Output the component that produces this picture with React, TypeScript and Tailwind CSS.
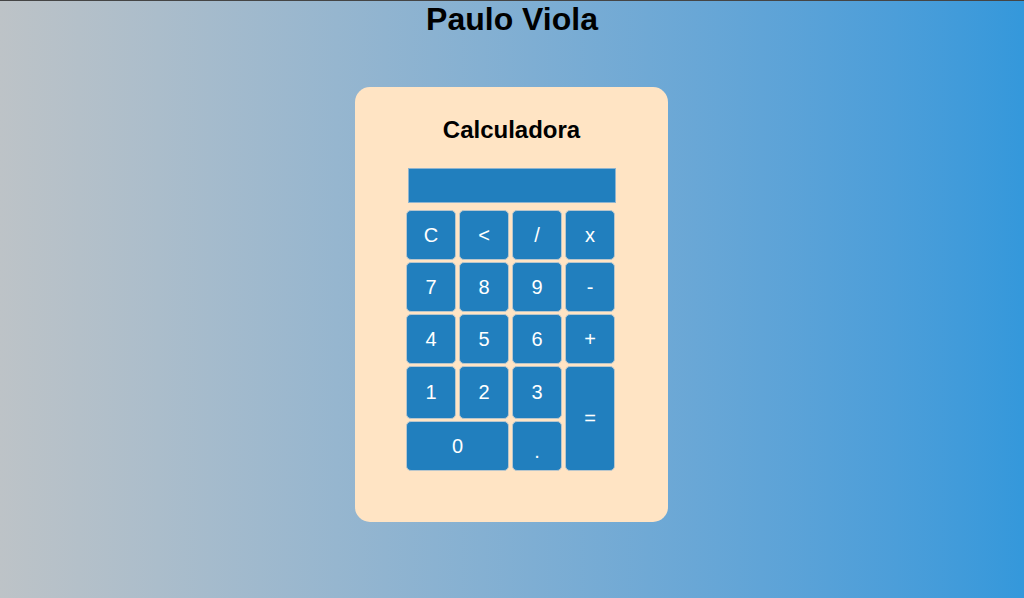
import React from "react";

const btn =
  "flex items-center justify-center rounded-[5px] border border-[#b9c6cc] bg-[#217fbe] text-white text-[20px] leading-none";

export default function App() {
  const font = { fontFamily: '"Liberation Sans", Arial, sans-serif' };
  return (
    <div
      className="w-[1024px] h-[598px] overflow-hidden bg-gradient-to-r from-[#bdc3c7] to-[#3498db] flex flex-col items-center"
      style={font}
    >
      <div className="w-full h-px bg-[#454545] shrink-0" />
      <h1 className="text-[32px] font-bold text-black leading-[36.8px] m-0">Paulo Viola</h1>
      <div className="mt-[49px] mr-[1px] w-[313px] h-[435px] rounded-[15px] bg-[#ffe4c4] flex flex-col items-center pt-[29px]">
        <h2 className="text-[24px] font-bold text-black leading-[28px] m-0">Calculadora</h2>
        <div className="mt-[24px] ml-[1px] w-[208px] h-[35px] bg-[#217fbe] border border-[#8fb4cf]" />
        <div className="mt-[7px] mr-[2px] grid grid-cols-[50px_50px_50px_50px] grid-rows-[50px_50px_50px_53px_50px] gap-x-[3px] gap-y-[2px]">
          <div className={btn}>C</div>
          <div className={btn}>&lt;</div>
          <div className={btn}>/</div>
          <div className={btn}>x</div>
          <div className={btn}>7</div>
          <div className={btn}>8</div>
          <div className={btn}>9</div>
          <div className={btn}>-</div>
          <div className={btn}>4</div>
          <div className={btn}>5</div>
          <div className={btn}>6</div>
          <div className={btn}>+</div>
          <div className={btn}>1</div>
          <div className={btn}>2</div>
          <div className={btn}>3</div>
          <div className={`${btn} row-span-2`}>=</div>
          <div className={`${btn} col-span-2`}>0</div>
          <div className={`${btn} pt-[10px]`}>.</div>
        </div>
      </div>
    </div>
  );
}
